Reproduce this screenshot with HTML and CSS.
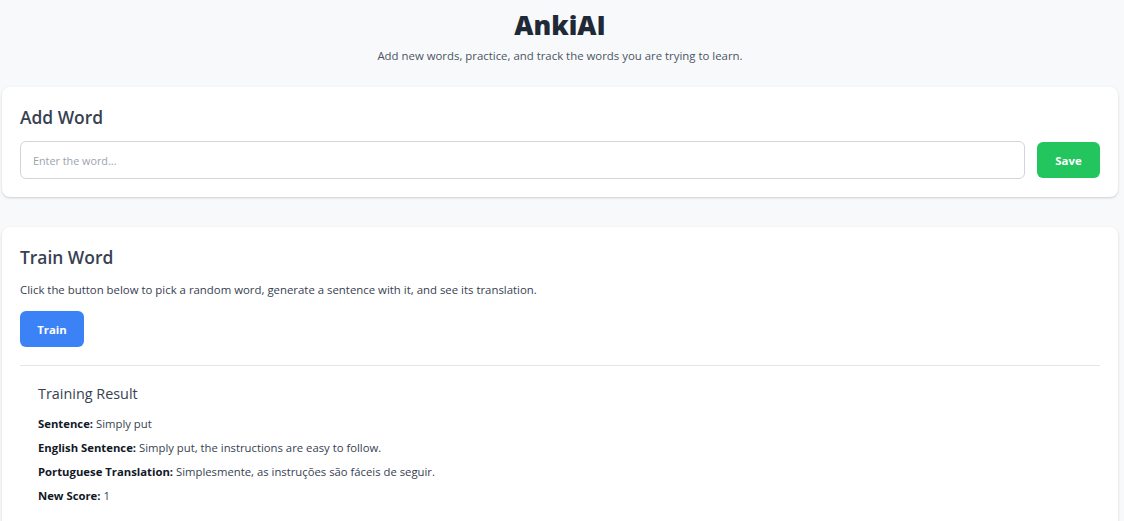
FILE: index.html
```html
<!DOCTYPE html>
<html lang="en">
<head>
<meta charset="utf-8">
<title>AnkiAI</title>
<link rel="stylesheet" href="styles.css">
</head>
<body>
<div class="page">
  <header class="header">
    <h1 class="title">AnkiAI</h1>
    <p class="subtitle">Add new words, practice, and track the words you are trying to learn.</p>
  </header>

  <section class="card">
    <h2 class="card-title">Add Word</h2>
    <div class="add-row">
      <input class="word-input" type="text" placeholder="Enter the word...">
      <button class="btn btn-green">Save</button>
    </div>
  </section>

  <section class="card card-train">
    <h2 class="card-title">Train Word</h2>
    <p class="desc">Click the button below to pick a random word, generate a sentence with it, and see its translation.</p>
    <button class="btn btn-blue">Train</button>
    <div class="result">
      <h3 class="result-title">Training Result</h3>
      <p class="line"><strong>Sentence:</strong> Simply put</p>
      <p class="line"><strong>English Sentence:</strong> Simply put, the instructions are easy to follow.</p>
      <p class="line"><strong>Portuguese Translation:</strong> Simplesmente, as instruções são fáceis de seguir.</p>
      <p class="line"><strong>New Score:</strong> 1</p>
    </div>
  </section>
</div>
</body>
</html>
```

FILE: styles.css
```css
* { box-sizing: border-box; }
html, body { margin: 0; padding: 0; }
body {
  background: #f8f9fb;
  font-family: "Open Sans", "Noto Sans", "Liberation Sans", sans-serif;
  color: #374151;
  overflow: hidden;
}
.page {
  padding: 0 6px 0 2px;
  display: flex;
  flex-direction: column;
}
.header {
  text-align: center;
  padding-top: 7px;
  height: 87px;
}
.title {
  margin: 0;
  font-size: 26.5px;
  line-height: 36px;
  font-weight: 800;
  color: #1f2937;
}
.subtitle {
  margin: 4px 0 0;
  font-size: 11.4px;
  line-height: 18px;
  color: #4b5563;
}
.card {
  background: #fff;
  border-radius: 8px;
  box-shadow: 0 1px 3px rgba(0,0,0,0.12), 0 1px 2px rgba(0,0,0,0.06);
  padding: 18px;
}
.card-train {
  margin-top: 30px;
  padding-bottom: 30px;
  display: flex;
  flex-direction: column;
}
.card-title {
  margin: 0 0 12px;
  font-size: 17.4px;
  line-height: 24px;
  font-weight: 600;
  color: #374151;
}
.add-row {
  display: flex;
  align-items: center;
  gap: 12px;
}
.word-input {
  flex: 1;
  height: 38px;
  border: 1px solid #d1d5db;
  border-radius: 6px;
  padding: 0 12px;
  font: inherit;
  font-size: 10.8px;
  color: #374151;
  outline: none;
}
.word-input::placeholder { color: #9ca3af; }
.btn {
  height: 36px;
  border: none;
  border-radius: 6px;
  color: #fff;
  font-family: inherit;
  font-size: 11.4px;
  font-weight: 700;
  padding: 0;
  cursor: pointer;
}
.btn-green { background: #22c55e; width: 63px; }
.btn-blue { background: #3b82f6; width: 64px; align-self: flex-start; }
.desc {
  margin: 0 0 12px;
  font-size: 11.4px;
  line-height: 18px;
  color: #374151;
}
.result {
  margin-top: 18px;
  border-top: 1px solid #e5e7eb;
  padding: 18px 18px 0;
}
.result-title {
  margin: 0 0 11px;
  font-size: 14.4px;
  line-height: 20px;
  font-weight: 400;
  color: #374151;
}
.line {
  margin: 0 0 6px;
  font-size: 11.3px;
  line-height: 18px;
  color: #374151;
}
.line strong { color: #111827; font-weight: 700; }
```
